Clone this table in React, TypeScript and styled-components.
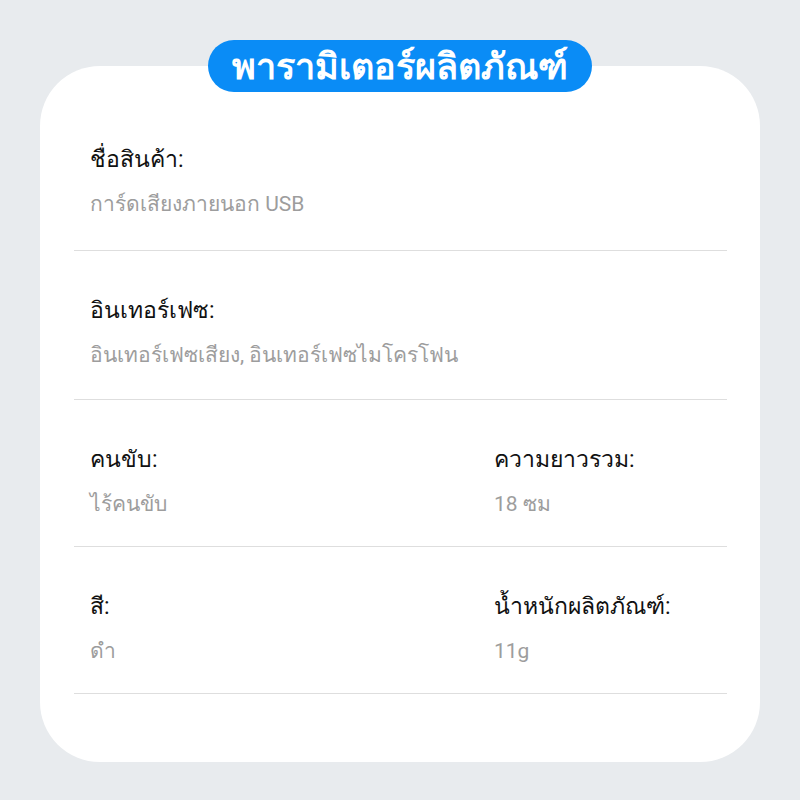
import styled, {createGlobalStyle} from 'styled-components';

const GlobalStyle = createGlobalStyle`
  html, body {
    margin: 0;
    padding: 0;
    background: #e8ebee;
    font-family: Roboto, 'Noto Sans', 'Liberation Sans', sans-serif;
  }
`;

interface Spec {
  label: string;
  value: string;
}

const rows: Spec[][] = [
  [{label: 'ชื่อสินค้า:', value: 'การ์ดเสียงภายนอก USB'}],
  [{label: 'อินเทอร์เฟซ:', value: 'อินเทอร์เฟซเสียง, อินเทอร์เฟซไมโครโฟน'}],
  [
    {label: 'คนขับ:', value: 'ไร้คนขับ'},
    {label: 'ความยาวรวม:', value: '18 ซม'},
  ],
  [
    {label: 'สี:', value: 'ดำ'},
    {label: 'น้ำหนักผลิตภัณฑ์:', value: '11g'},
  ],
];

const rowHeights = [151, 149, 147, 147];

const Page = styled.div`
  width: 800px;
  height: 800px;
  box-sizing: border-box;
  padding: 66px 40px 38px;
`;

const Card = styled.div`
  position: relative;
  height: 100%;
  box-sizing: border-box;
  background: #fff;
  border-radius: 60px;
  padding: 34px 33px 0 34px;
`;

const TitlePill = styled.div`
  position: absolute;
  top: -26px;
  left: 50%;
  transform: translateX(-50%);
  height: 52px;
  padding: 0 24px;
  display: flex;
  align-items: center;
  background: #0a8cf6;
  border-radius: 26px;
  color: #fff;
  font-size: 36px;
  font-weight: 700;
  white-space: nowrap;
`;

const Row = styled.div<{$h: number}>`
  display: grid;
  grid-template-columns: 404px 1fr;
  height: ${(p) => p.$h}px;
  box-sizing: border-box;
  padding: 0 0 0 16px;
  border-bottom: 1px solid #dedede;
`;

const Cell = styled.div`
  padding-top: 45px;
  display: flex;
  flex-direction: column;
  gap: 14px;
`;

const Label = styled.div`
  font-size: 23px;
  line-height: 30px;
  color: #111;
  white-space: nowrap;
`;

const Value = styled.div`
  font-size: 21px;
  line-height: 30px;
  color: #9d9d9d;
  white-space: nowrap;
`;

export default function App() {
  return (
    <>
      <GlobalStyle />
      <Page>
        <Card>
          <TitlePill>พารามิเตอร์ผลิตภัณฑ์</TitlePill>
          {rows.map((row, i) => (
            <Row key={i} $h={rowHeights[i]}>
              {row.map((s) => (
                <Cell key={s.label}>
                  <Label>{s.label}</Label>
                  <Value>{s.value}</Value>
                </Cell>
              ))}
            </Row>
          ))}
        </Card>
      </Page>
    </>
  );
}
